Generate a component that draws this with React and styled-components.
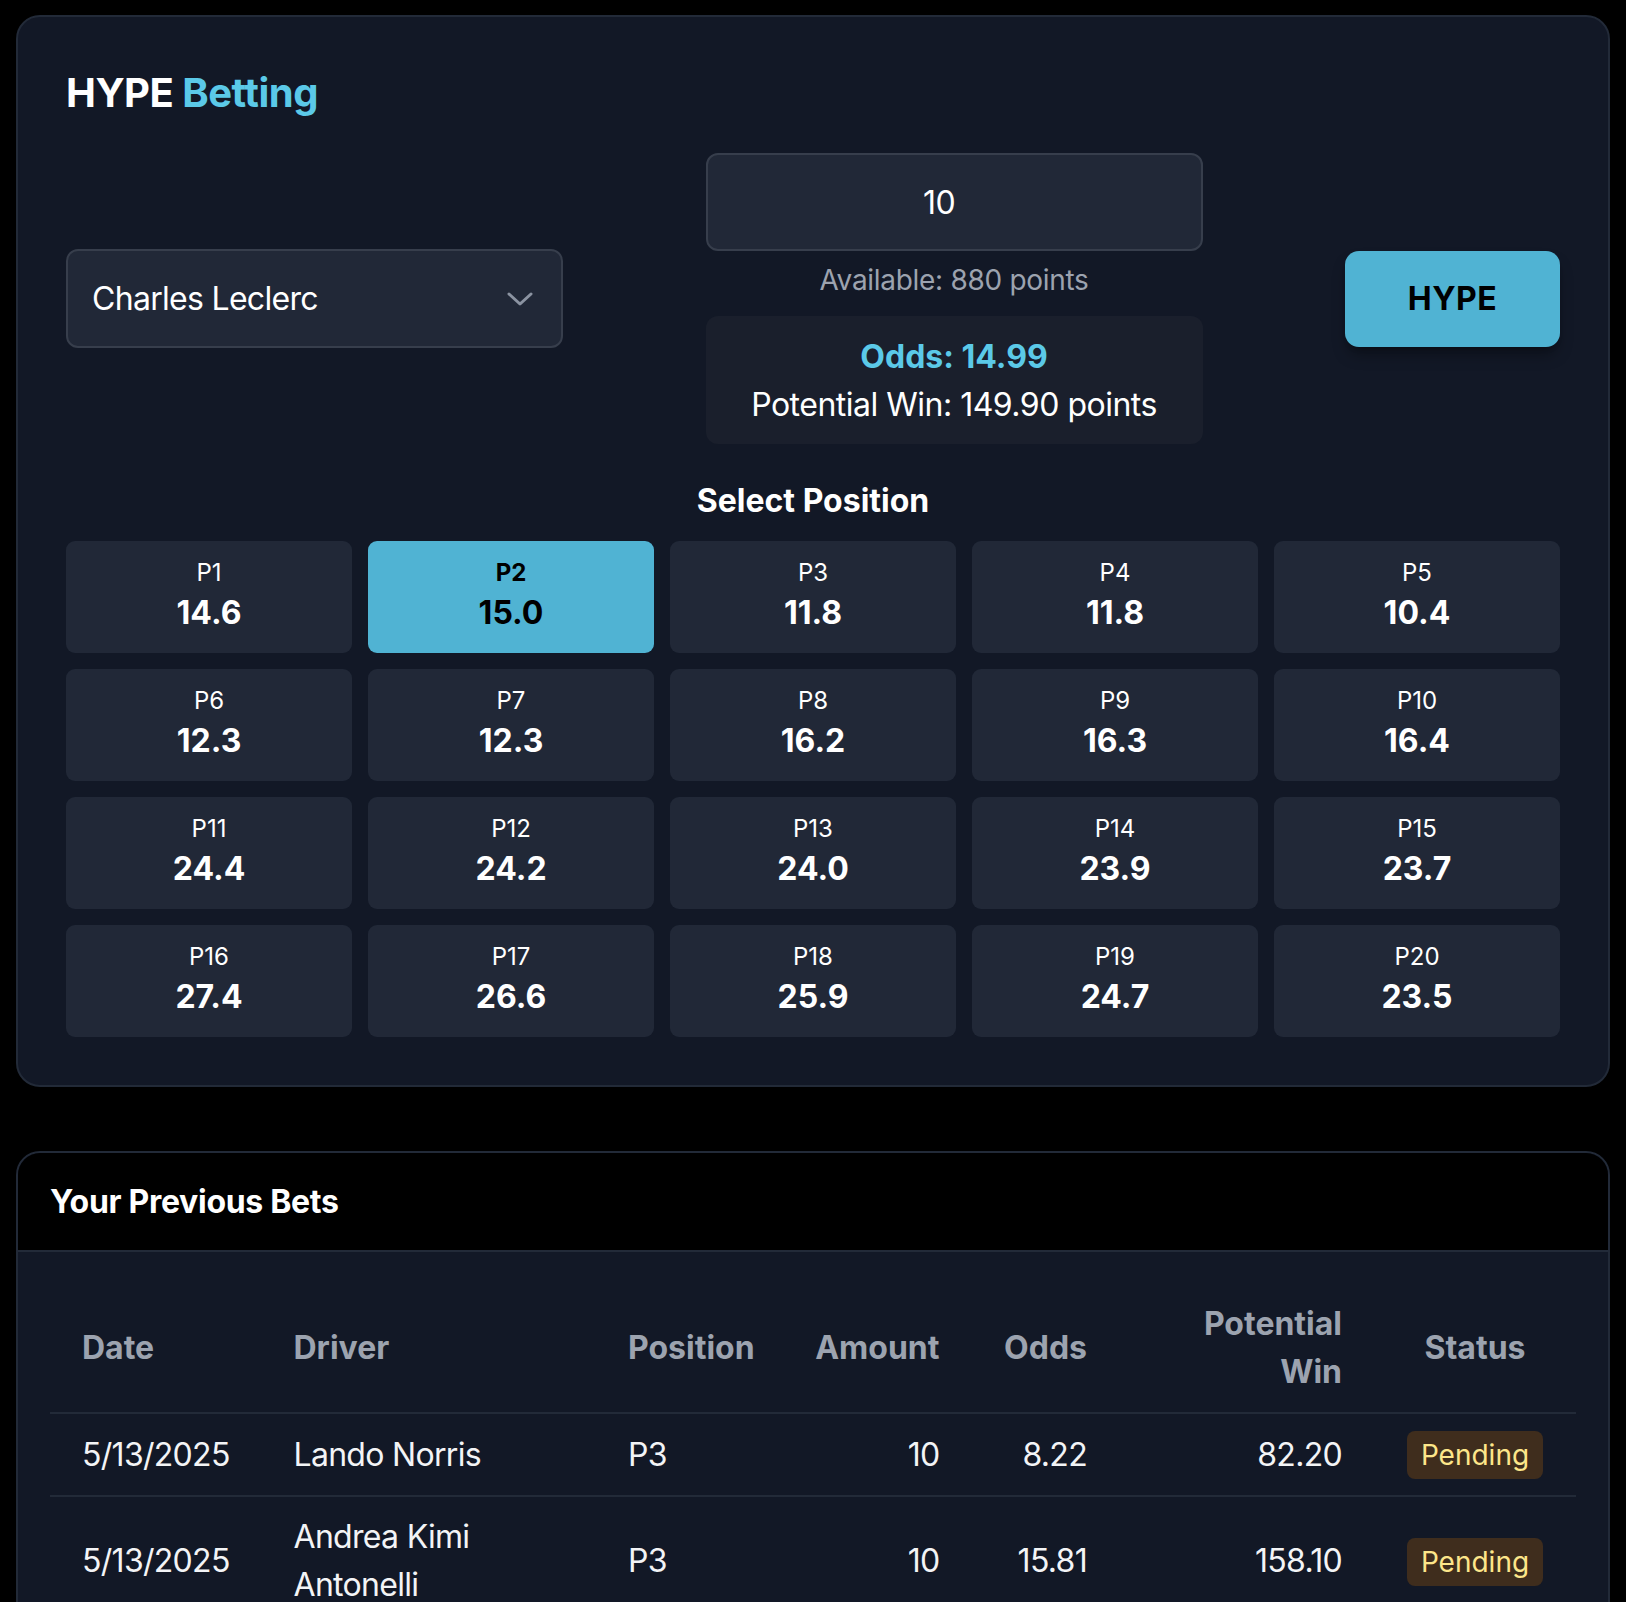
import React, { useState } from "react";
import styled, { createGlobalStyle } from "styled-components";

const odds = [
  14.6, 15.0, 11.8, 11.8, 10.4,
  12.3, 12.3, 16.2, 16.3, 16.4,
  24.4, 24.2, 24.0, 23.9, 23.7,
  27.4, 26.6, 25.9, 24.7, 23.5,
];

const bets = [
  { date: "5/13/2025", driver: "Lando Norris", position: "P3", amount: 10, odds: "8.22", win: "82.20", status: "Pending" },
  { date: "5/13/2025", driver: "Andrea Kimi Antonelli", position: "P3", amount: 10, odds: "15.81", win: "158.10", status: "Pending" },
];

const GlobalStyle = createGlobalStyle`
  body {
    margin: 0;
    background: #000;
    font-family: Inter, "Noto Sans", sans-serif;
    color: #fff;
  }
`;

const Page = styled.div`
  padding: 15px 16px 0 16px;
`;

const Card = styled.div`
  background: #121826;
  border: 2px solid #222a38;
  border-radius: 24px;
  padding: 48px;
  margin-bottom: 64px;
`;

const Title = styled.h1`
  margin: 0 0 32px 0;
  font-size: 40px;
  line-height: 56px;
  font-weight: 700;
  letter-spacing: -0.5px;
  color: #fff;

  span {
    color: #5bc9e8;
  }
`;

const TopRow = styled.div`
  display: flex;
  justify-content: space-between;
  align-items: center;
`;

const Select = styled.div`
  width: 497px;
  box-sizing: border-box;
  display: flex;
  align-items: center;
  justify-content: space-between;
  padding: 23px 28px 23px 24px;
  background: #212837;
  border: 2px solid #373e4c;
  border-radius: 12px;
  font-size: 32px;
  line-height: 49px;
  letter-spacing: -0.7px;
  color: #fff;

  svg {
    display: block;
  }
`;

const Middle = styled.div`
  width: 497px;
  display: flex;
  flex-direction: column;
`;

const AmountInput = styled.div`
  box-sizing: border-box;
  height: 98px;
  padding: 0 30px 0 0;
  display: flex;
  align-items: center;
  justify-content: center;
  background: #212837;
  border: 2px solid #373e4c;
  border-radius: 12px;
  font-size: 32px;
  letter-spacing: -0.5px;
  color: #fff;
`;

const Available = styled.div`
  margin-top: 9px;
  text-align: center;
  font-size: 28px;
  line-height: 40px;
  letter-spacing: -0.3px;
  color: #9ca3af;
`;

const OddsBox = styled.div`
  margin-top: 16px;
  padding: 17px 16px 15px;
  background: #1a1f2c;
  border-radius: 12px;
  text-align: center;
  font-size: 32px;
  line-height: 48px;
  letter-spacing: -0.5px;
`;

const OddsLine = styled.div`
  color: #5bc9e8;
  font-weight: 700;
  letter-spacing: 0;
`;

const HypeButton = styled.button`
  width: 215px;
  height: 96px;
  border: none;
  border-radius: 14px;
  background: #50b3d3;
  color: #000;
  font-family: inherit;
  font-size: 32px;
  font-weight: 700;
  letter-spacing: 0.5px;
  box-shadow: 0 10px 15px -3px rgba(0, 0, 0, 0.35), 0 4px 6px -4px rgba(0, 0, 0, 0.3);
  cursor: pointer;
`;

const SectionHeading = styled.h2`
  margin: 33px 0 16px 0;
  text-align: center;
  font-size: 32px;
  line-height: 48px;
  font-weight: 700;
  color: #fff;
`;

const Grid = styled.div`
  display: grid;
  grid-template-columns: repeat(5, 1fr);
  gap: 16px;
`;

const PosCell = styled.button`
  padding: 16px;
  border: none;
  border-radius: 9px;
  font-family: inherit;
  background: ${(p) => (p.$active ? "#50b3d3" : "#212837")};
  color: ${(p) => (p.$active ? "#000" : "#fff")};
  text-align: center;
  cursor: pointer;
`;

const PosLabel = styled.div`
  font-size: 24px;
  line-height: 32px;
  font-weight: ${(p) => (p.$active ? 700 : 400)};
`;

const PosOdds = styled.div`
  font-size: 32px;
  line-height: 48px;
  font-weight: 700;
`;

const BetsCard = styled.div`
  border: 2px solid #222a38;
  border-radius: 24px;
  overflow: hidden;
  background: #121826;
`;

const BetsHeader = styled.div`
  background: #000;
  padding: 25px 32px 24px;
  border-bottom: 2px solid #222a38;
  font-size: 32px;
  line-height: 48px;
  font-weight: 700;
  letter-spacing: -0.3px;
`;

const BetsBody = styled.div`
  padding: 32px;
`;

const Table = styled.table`
  width: 100%;
  border-collapse: collapse;
  table-layout: fixed;
`;

const Th = styled.th`
  padding: 16px 32px;
  font-size: 32px;
  line-height: 48px;
  font-weight: 700;
  color: #9ca3af;
  text-align: ${(p) => p.$align || "left"};
  vertical-align: middle;
`;

const Tr = styled.tr`
  border-bottom: 2px solid #222a38;
`;

const Td = styled.td`
  padding: 16px 32px;
  font-size: 32px;
  line-height: 48px;
  letter-spacing: -0.7px;
  color: #f3f4f6;
  text-align: ${(p) => p.$align || "left"};
  vertical-align: middle;
`;

const Badge = styled.span`
  display: inline-block;
  padding: 4px 14px;
  border-radius: 8px;
  background: #3f2d1d;
  color: #fde68a;
  font-size: 28px;
  line-height: 40px;
  letter-spacing: 0;
`;

const Chevron = () => (
  <svg width="26" height="14" viewBox="0 0 26 14" fill="none">
    <path d="M2 2 L13 12 L24 2" stroke="#8b93a1" strokeWidth="3" strokeLinecap="round" strokeLinejoin="round" />
  </svg>
);

export default function App() {
  const [selected, setSelected] = useState(1);

  return (
    <Page>
      <GlobalStyle />
      <Card>
        <Title>
          HYPE <span>Betting</span>
        </Title>
        <TopRow>
          <Select>
            Charles Leclerc
            <Chevron />
          </Select>
          <Middle>
            <AmountInput>10</AmountInput>
            <Available>Available: 880 points</Available>
            <OddsBox>
              <OddsLine>Odds: 14.99</OddsLine>
              <div>Potential Win: 149.90 points</div>
            </OddsBox>
          </Middle>
          <HypeButton>HYPE</HypeButton>
        </TopRow>

        <SectionHeading>Select Position</SectionHeading>
        <Grid>
          {odds.map((o, i) => (
            <PosCell key={i} $active={i === selected} onClick={() => setSelected(i)}>
              <PosLabel $active={i === selected}>P{i + 1}</PosLabel>
              <PosOdds>{o.toFixed(1)}</PosOdds>
            </PosCell>
          ))}
        </Grid>
      </Card>

      <BetsCard>
        <BetsHeader>Your Previous Bets</BetsHeader>
        <BetsBody>
          <Table>
            <colgroup>
              <col style={{ width: "211.5px" }} />
              <col style={{ width: "334.5px" }} />
              <col style={{ width: "184px" }} />
              <col style={{ width: "191.5px" }} />
              <col style={{ width: "147.5px" }} />
              <col style={{ width: "255px" }} />
              <col style={{ width: "202px" }} />
            </colgroup>
            <thead>
              <Tr>
                <Th>Date</Th>
                <Th>Driver</Th>
                <Th>Position</Th>
                <Th $align="right">Amount</Th>
                <Th $align="right">Odds</Th>
                <Th $align="right">Potential Win</Th>
                <Th $align="center">Status</Th>
              </Tr>
            </thead>
            <tbody>
              {bets.map((b, i) => (
                <Tr key={i}>
                  <Td>{b.date}</Td>
                  <Td>{b.driver}</Td>
                  <Td>{b.position}</Td>
                  <Td $align="right">{b.amount}</Td>
                  <Td $align="right">{b.odds}</Td>
                  <Td $align="right">{b.win}</Td>
                  <Td $align="center">
                    <Badge>{b.status}</Badge>
                  </Td>
                </Tr>
              ))}
            </tbody>
          </Table>
        </BetsBody>
      </BetsCard>
    </Page>
  );
}
